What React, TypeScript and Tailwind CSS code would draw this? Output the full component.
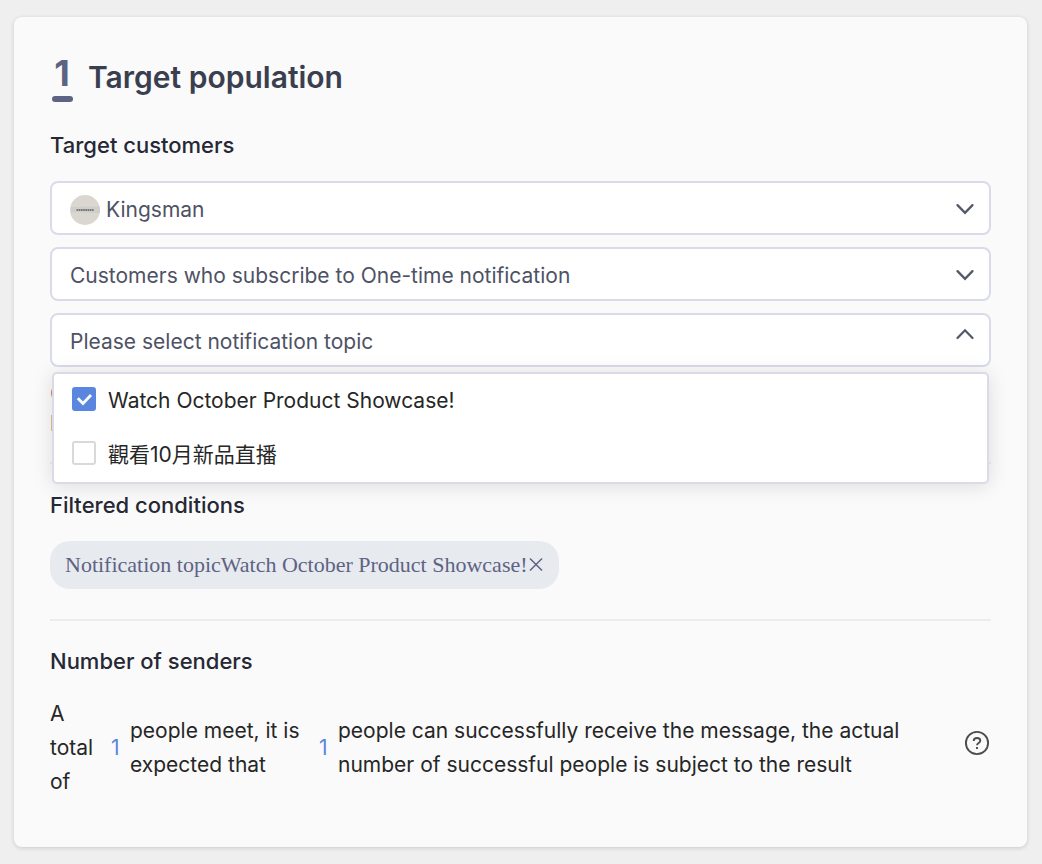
import { useState } from "react";
import type { ReactNode } from "react";

const TOPICS = ["Watch October Product Showcase!", "觀看10月新品直播"];

function Chevron({ up = false }: { up?: boolean }) {
  return (
    <svg
      className="pointer-events-none h-5 w-5 text-[#545869]"
      viewBox="0 0 20 20"
      fill="none"
      stroke="currentColor"
      strokeWidth="2.3"
      strokeLinecap="round"
      aria-hidden="true"
    >
      <path d={up ? "M2.5 14 10 6.3 17.5 14" : "M2.5 7.1 10 14.8 17.5 7.1"} />
    </svg>
  );
}

function SelectField({ label, value, avatar }: { label: string; value: string; avatar?: ReactNode }) {
  return (
    <div className="grid h-[54px] items-center rounded-lg border-2 border-[#d9dbe9] bg-white">
      <select
        aria-label={label}
        defaultValue={value}
        className={`col-start-1 row-start-1 h-full w-full appearance-none rounded-lg bg-transparent pt-1 pr-12 text-[21px] text-[#4e5265] ${
          avatar ? "pl-[54px]" : "pl-[18px]"
        }`}
      >
        <option>{value}</option>
      </select>
      {avatar && <span className="pointer-events-none col-start-1 row-start-1 ml-[18px] justify-self-start">{avatar}</span>}
      <span className="pointer-events-none col-start-1 row-start-1 mr-[14px] justify-self-end">
        <Chevron />
      </span>
    </div>
  );
}

function Avatar() {
  return (
    <svg className="mt-[3px] block h-[30px] w-[30px]" viewBox="0 0 30 30" aria-hidden="true">
      <circle cx="15" cy="15" r="15" fill="#d9d7cf" />
      <path d="M1 12 29.7 11.5a15 15 0 0 1 0 6.5L1 17Z" fill="#cfcecb" />
      <path d="M6.5 15H24" stroke="#77777a" strokeWidth="2.2" strokeDasharray="1.7 .5" />
    </svg>
  );
}

function Topic({ name, checked, onToggle }: { name: string; checked: boolean; onToggle: () => void }) {
  return (
    <label className="flex h-[54px] items-center gap-3 px-[18px] pb-1">
      <span className="grid h-6 w-6 shrink-0">
        <input
          type="checkbox"
          checked={checked}
          onChange={onToggle}
          className="col-start-1 row-start-1 h-6 w-6 appearance-none rounded-[3px] border-2 border-[#d9d9d9] bg-white checked:border-[#5b86e0] checked:bg-[#5b86e0]"
        />
        {checked && (
          <svg
            className="pointer-events-none col-start-1 row-start-1 h-6 w-6"
            viewBox="0 0 24 24"
            fill="none"
            stroke="white"
            strokeWidth="2.8"
            aria-hidden="true"
          >
            <path d="M5.8 11.3 11 16.5 19 8" />
          </svg>
        )}
      </span>
      <span className="pt-1 text-[21px] text-[#262626]">{name}</span>
    </label>
  );
}

export default function App() {
  const [open, setOpen] = useState(true);
  const [selected, setSelected] = useState<string[]>([TOPICS[0]]);
  const toggle = (name: string) =>
    setSelected((list) => (list.includes(name) ? list.filter((n) => n !== name) : [...list, name]));

  return (
    <main className="min-h-screen bg-[#efefef] pt-[17px] pr-[15px] pb-4 pl-[14px] font-['Inter','Noto_Sans_CJK_TC',sans-serif] text-[21px] text-[#262626]">
      <section className="rounded-lg bg-[#fafafa] px-9 pt-9 pb-12 shadow-[0_1px_4px_rgba(0,0,0,0.16)]">
        <header className="flex items-start gap-[14px]">
          <div className="flex w-6 flex-col items-center pt-[2px]">
            <span className="text-[36px] leading-[36px] font-bold text-[#5d6383]">1</span>
            <span className="mt-[5px] h-[6px] w-[21px] rounded-full bg-[#5d6383]" />
          </div>
          <h1 className="pt-1 text-[30px] leading-[40px] font-semibold text-[#3a3f50]">Target population</h1>
        </header>

        <h2 className="mt-[27px] text-[22px] leading-[32px] font-medium text-[#262835]">Target customers</h2>
        <div className="mt-5 flex flex-col gap-3">
          <SelectField label="Page" value="Kingsman" avatar={<Avatar />} />
          <SelectField label="Customer group" value="Customers who subscribe to One-time notification" />
          <div className="relative">
            <button
              type="button"
              aria-expanded={open}
              aria-controls="topics"
              onClick={() => setOpen(!open)}
              className="flex h-[54px] w-full items-center justify-between rounded-lg border-2 border-[#d9dbe9] bg-white pr-[14px] pl-[18px] text-left text-[21px] text-[#4e5265]"
            >
              <span className="pt-1">Please select notification topic</span>
              <span className={open ? "pb-3" : ""}>
                <Chevron up={open} />
              </span>
            </button>
            {open && (
              <div
                id="topics"
                className="absolute inset-x-[2px] top-[59px] z-10 rounded-[5px] border-2 border-[#d9dbe9] bg-white shadow-[0_2px_20px_rgba(0,0,0,0.12)]"
              >
                {TOPICS.map((name) => (
                  <Topic key={name} name={name} checked={selected.includes(name)} onToggle={() => toggle(name)} />
                ))}
              </div>
            )}
          </div>
        </div>
        <p className="mt-3 leading-[30px] text-[#6b6f82]">
          Or
          <br />
          list
        </p>
        <hr className="mt-[23px] border-t-2 border-[#ececec]" />

        <h2 className="mt-[25px] text-[22px] leading-[32px] font-medium text-[#262835]">Filtered conditions</h2>
        <div className="mt-5 flex min-h-12 flex-wrap gap-2">
          {selected.map((name) => (
            <div
              key={name}
              className="flex h-12 items-center rounded-[20px] bg-[#e7eaef] px-[15px] pb-[2px] font-['Liberation_Serif','Noto_Sans_CJK_TC',serif] text-[22px] text-[#5d6383]"
            >
              <span>Notification topic{name}</span>
              <button type="button" aria-label={`Remove ${name}`} onClick={() => toggle(name)}>
                <svg
                  className="block h-4 w-4"
                  viewBox="0 0 16 16"
                  fill="none"
                  stroke="currentColor"
                  strokeWidth="1.5"
                  aria-hidden="true"
                >
                  <path d="m2 2.5 12 12M14 2.5 2 14.5" />
                </svg>
              </button>
            </div>
          ))}
        </div>
        <hr className="mt-[30px] border-t-2 border-[#ececec]" />

        <h2 className="mt-6 text-[22px] leading-[32px] font-medium text-[#262835]">Number of senders</h2>
        <div className="mt-5 flex items-center leading-[34px]">
          <p className="w-12 shrink-0">A total of</p>
          <span className="w-8 shrink-0 pl-[13px] text-[#5b86e0]">1</span>
          <p className="w-44 shrink-0">people meet, it is expected that</p>
          <span className="w-8 shrink-0 pl-[13px] text-[#5b86e0]">1</span>
          <p className="max-w-[600px] flex-1">
            people can successfully receive the message, the actual number of successful people is subject to the result
          </p>
          <button type="button" aria-label="Help" className="ml-auto pb-[10px] text-[#4c4c4c]">
            <svg className="block h-7 w-7" viewBox="0 0 28 28" fill="none" stroke="currentColor" strokeWidth="1.9" aria-hidden="true">
              <circle cx="14" cy="14" r="11.1" />
              <path d="M10.7 11.9c0-1.8 1.4-2.9 3.3-2.9s3.3 1.1 3.3 2.7c0 2.2-3.3 2.3-3.3 4.6" />
              <path d="M14 18v2" />
            </svg>
          </button>
        </div>
      </section>
    </main>
  );
}
